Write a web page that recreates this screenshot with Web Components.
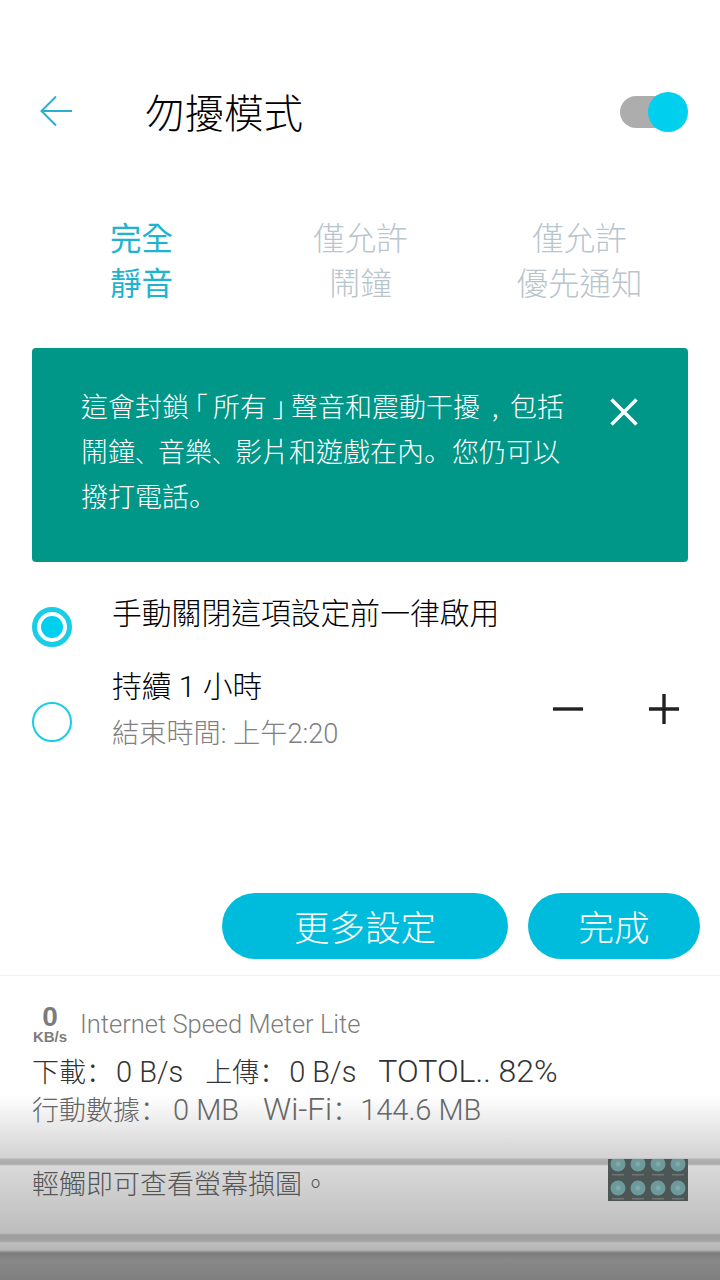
<!DOCTYPE html>
<html lang="zh-Hant">
<head>
<meta charset="utf-8">
<title>勿擾模式</title>
<style>
	html, body { margin: 0; padding: 0; }
	body {
		width: 720px;
		height: 1280px;
		overflow: hidden;
		background: #fff;
		font-family: Roboto, "Noto Sans CJK TC", sans-serif;
		font-weight: 300;
	}
</style>
</head>
<body>
	<dnd-panel>
		<dnd-header title="勿擾模式"></dnd-header>
		<mode-tabs>
			<mode-tab active>完全<br>靜音</mode-tab>
			<mode-tab>僅允許<br>鬧鐘</mode-tab>
			<mode-tab>僅允許<br>優先通知</mode-tab>
		</mode-tabs>
		<info-banner>這會封鎖<span class="bk">｢</span>所有<span class="bk">｣</span>聲音和震動干擾<span class="cm">,</span>包括<br>鬧鐘<span class="dn">、</span>音樂<span class="dn">、</span>影片和遊戲在內<span class="pd">。</span>您仍可以<br>撥打電話<span class="pd">。</span></info-banner>
		<radio-row checked label="手動關閉這項設定前一律啟用"></radio-row>
		<radio-row label="持續 1 小時" hint="結束時間: 上午2:20" stepper></radio-row>
		<button-bar>
			<pill-button width="286">更多設定</pill-button>
			<pill-button width="172">完成</pill-button>
		</button-bar>
	</dnd-panel>
	<notification-shade>
		<speed-card></speed-card>
		<shot-card></shot-card>
	</notification-shade>

<script>
class dndPanel extends HTMLElement {
	constructor() {
		super();
		this.attachShadow({ mode: 'open' });
		this.shadowRoot.innerHTML = `
			<style>
				:host { display: flex; flex-direction: column; height: 976px; box-sizing: border-box; border-bottom: 1px solid #f0f0f0; }
			</style>
			<slot></slot>
		`;
	}
}

class dndHeader extends HTMLElement {
	constructor() {
		super();
		this.attachShadow({ mode: 'open' });
		this.shadowRoot.innerHTML = `
			<style>
				:host { display: flex; align-items: center; height: 64px; margin-top: 80px; padding: 0 32px 0 40px; }
				svg.back { width: 32px; height: 32px; flex: none; }
				h1 { flex: 1; margin: 5px 0 0 73px; font-size: 39.500px; line-height: 60px; font-weight: 300; color: #000; }
				.toggle { position: relative; width: 68px; height: 40px; flex: none; }
				.track { position: absolute; left: 0; right: 8px; top: 4px; height: 32px; border-radius: 16px; background: #adadad; }
				.knob { position: absolute; right: 0; top: 0; width: 40px; height: 40px; border-radius: 50%; background: #00cfee; }
			</style>
			<svg class="back" viewBox="0 0 32 32" fill="none" stroke="#2aaed3" stroke-width="2">
				<path d="M32 15H1M16 .5 1.500 15 16 29.500"/>
			</svg>
			<h1></h1>
			<div class="toggle"><div class="track"></div><div class="knob"></div></div>
		`;
		this.shadowRoot.querySelector('h1').textContent = this.getAttribute('title');
		this.removeAttribute('title');
	}
}

class modeTabs extends HTMLElement {
	constructor() {
		super();
		this.attachShadow({ mode: 'open' });
		this.shadowRoot.innerHTML = `
			<style>
				:host { display: grid; grid-template-columns: 219px 219px 219px; margin: 73px 0 0 32px; }
			</style>
			<slot></slot>
		`;
	}
}

class modeTab extends HTMLElement {
	constructor() {
		super();
		this.attachShadow({ mode: 'open' });
		this.shadowRoot.innerHTML = `
			<style>
				:host { display: block; text-align: center; font-size: 31.500px; line-height: 45px; color: #b9c5cc; }
				:host([active]) { color: #1fb3cf; font-weight: 400; }
			</style>
			<slot></slot>
		`;
	}
}

class infoBanner extends HTMLElement {
	constructor() {
		super();
		this.attachShadow({ mode: 'open' });
		this.shadowRoot.innerHTML = `
			<style>
				:host { display: flex; justify-content: space-between; box-sizing: border-box; height: 214px; margin: 41px 32px 0; padding: 38px 50px 0 49px; border-radius: 4px; background: #009688; color: #fff; font-size: 27px; line-height: 45px; }
				svg { width: 28px; height: 28px; margin-top: 12px; flex: none; }
				::slotted(span) { display: inline-block; line-height: 1; font-family: "Noto Sans CJK SC", sans-serif; }
				::slotted(.bk) { width: 24px; text-align: center; }
				::slotted(.cm) { width: 30px; text-align: center; }
				::slotted(.dn) { font-size: 23px; }
				::slotted(.pd) { font-size: 28px; }
			</style>
			<div><slot></slot></div>
			<svg viewBox="0 0 28 28" fill="none" stroke="#fff" stroke-width="3.400"><path d="M1.500 1.500 26.500 26.500M26.500 1.500 1.500 26.500"/></svg>
		`;
	}
}

class radioRow extends HTMLElement {
	constructor() {
		super();
		this.attachShadow({ mode: 'open' });
		const hint = this.getAttribute('hint');
		this.shadowRoot.innerHTML = `
			<style>
				:host { display: flex; position: relative; padding: 0 32px; height: 90px; }
				:host([checked]) { margin-top: 32px; height: 73px; }
				.radio { box-sizing: border-box; width: 40px; height: 40px; margin-top: 35px; margin-right: 40px; border-radius: 50%; border: 2px solid #18cde6; flex: none; }
				:host([checked]) .radio { border-width: 5px; display: flex; align-items: center; justify-content: center; margin-top: 13px; }
				:host([checked]) .radio::after { content: ''; width: 22px; height: 22px; border-radius: 50%; background: #00cfee; }
				.text { flex: 1; }
				.label { font-size: 29.800px; line-height: 40px; color: #000; font-weight: 300; }
				.hint { font-size: 27.200px; line-height: 36px; margin-top: 9px; color: #808080; }
				.stepper { display: flex; gap: 66px; margin: 27px 9px 0 0; }
				svg { width: 30px; height: 30px; }
			</style>
			<div class="radio"></div>
			<div class="text">
				<div class="label"></div>
				${hint ? '<div class="hint"></div>' : ''}
			</div>
			${this.hasAttribute('stepper') ? `
				<div class="stepper">
					<svg viewBox="0 0 30 30" stroke="#212121" stroke-width="3.400"><path d="M0 15H30"/></svg>
					<svg viewBox="0 0 30 30" stroke="#212121" stroke-width="3.400"><path d="M0 15H30M15 0V30"/></svg>
				</div>` : ''}
		`;
		this.shadowRoot.querySelector('.label').textContent = this.getAttribute('label');
		if (hint) this.shadowRoot.querySelector('.hint').textContent = hint;
	}
}

class buttonBar extends HTMLElement {
	constructor() {
		super();
		this.attachShadow({ mode: 'open' });
		this.shadowRoot.innerHTML = `
			<style>
				:host { display: flex; justify-content: flex-end; gap: 20px; margin-top: auto; padding: 0 20px 16px 0; }
			</style>
			<slot></slot>
		`;
	}
}

class pillButton extends HTMLElement {
	constructor() {
		super();
		this.attachShadow({ mode: 'open' });
		this.shadowRoot.innerHTML = `
			<style>
				:host { display: flex; align-items: center; justify-content: center; box-sizing: border-box; height: 66px; padding-bottom: 2px; border-radius: 33px; background: #00bcdc; color: #fff; font-size: 35.500px; }
			</style>
			<slot></slot>
		`;
		this.style.width = `${this.getAttribute('width')}px`;
	}
}

class notificationShade extends HTMLElement {
	constructor() {
		super();
		this.attachShadow({ mode: 'open' });
		this.shadowRoot.innerHTML = `
			<style>
				:host {
					display: block;
					height: 304px;
					box-sizing: border-box;
					background: linear-gradient(to bottom,
						#fff 0, #fff 119px,
						#d2d2d2 182px, #b3b3b3 183px, #a9a9a9 188px,
						#d9d9d9 190px, #bdbdbd 257px, #9c9c9c 259px, #a2a2a2 265px,
						#bfbfbf 267px, #b5b5b5 274px, #7b7b7b 277px, #888 284px, #7f7f7f 304px);
				}
			</style>
			<slot></slot>
		`;
	}
}

class speedCard extends HTMLElement {
	constructor() {
		super();
		this.attachShadow({ mode: 'open' });
		this.shadowRoot.innerHTML = `
			<style>
				:host { display: block; padding: 26px 0 0 32px; }
				.top { display: flex; align-items: center; height: 44px; }
				.meter { width: 36px; text-align: center; font-family: "Liberation Sans", sans-serif; font-weight: 700; color: #7c7c7c; margin-right: 12px; }
				.meter b { display: block; font-size: 28px; line-height: 24px; }
				.meter span { display: block; font-size: 15px; line-height: 15px; }
				.app { font-size: 25.500px; color: #7d7d7d; }
				.line { display: flex; align-items: baseline; height: 39px; font-size: 27px; line-height: 39px; white-space: pre; }
				.line span { line-height: 1; }
				.lat { font-size: 29px; }
				.wide { font-size: 31.500px; }
				.tot { font-size: 32px; }
				.colon { width: 30px; font-family: "Noto Sans CJK SC", sans-serif; }
				.sp { width: 22px; }
				.dl { margin-top: 9px; color: #333; }
				.data { color: #666; }
				.data .sp { width: 24px; }
				.data .first { width: 33px; }
				.data .second { width: 28px; }
			</style>
			<div class="top">
				<div class="meter"><b>0</b><span>KB/s</span></div>
				<div class="app">Internet Speed Meter Lite</div>
			</div>
			<div class="line dl"><span>下載</span><span class="colon">：</span><span class="lat">0 B/s</span><span class="sp"></span><span>上傳</span><span class="colon">：</span><span class="lat">0 B/s</span><span class="sp"></span><span class="tot">TOTOL.. 82%</span></div>
			<div class="line data"><span>行動數據</span><span class="colon first">：</span><span class="lat">0 MB</span><span class="sp"></span><span class="wide">Wi-Fi</span><span class="colon second">：</span><span class="lat">144.6 MB</span></div>
		`;
	}
}

class shotCard extends HTMLElement {
	constructor() {
		super();
		this.attachShadow({ mode: 'open' });
		const xs = [10, 30, 50, 70];
		// the shot behind is a grid of round tiles, top row clipped
		const tiles = [5, 29].map(y => xs.map(x => `
			<circle cx="${x}" cy="${y}" r="7.500" fill="#6c9a9b"/>
			<circle cx="${x}" cy="${y}" r="2.500" fill="#81a9a9"/>
			<rect x="${x - 6}" y="${y + 10}" width="12" height="1.500" fill="#6d7675"/>`).join('')).join('');
		this.shadowRoot.innerHTML = `
			<style>
				:host { display: flex; justify-content: space-between; box-sizing: border-box; height: 60px; margin-top: 27px; padding: 0 32px; }
				.msg { font-size: 27px; line-height: 50px; color: #555; }
				.msg span { line-height: 1; font-family: "Noto Sans CJK SC", sans-serif; }
				svg { display: block; width: 80px; height: 42px; margin-top: -1px; background: #4c5655; }
			</style>
			<div class="msg">輕觸即可查看螢幕擷圖<span>。</span></div>
			<svg viewBox="0 0 80 42">${tiles}</svg>
		`;
	}
}

customElements.define('dnd-panel', dndPanel);
customElements.define('dnd-header', dndHeader);
customElements.define('mode-tabs', modeTabs);
customElements.define('mode-tab', modeTab);
customElements.define('info-banner', infoBanner);
customElements.define('radio-row', radioRow);
customElements.define('button-bar', buttonBar);
customElements.define('pill-button', pillButton);
customElements.define('notification-shade', notificationShade);
customElements.define('speed-card', speedCard);
customElements.define('shot-card', shotCard);
</script>
</body>
</html>
